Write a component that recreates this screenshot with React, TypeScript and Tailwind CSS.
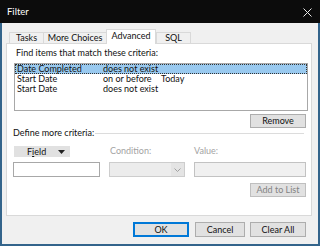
import React from 'react';

const rows = [
  { field: 'Date Completed', cond: 'does not exist', value: '' },
  { field: 'Start Date', cond: 'on or before', value: 'Today' },
  { field: 'Start Date', cond: 'does not exist', value: '' },
];

const tabs = [
  { name: 'Tasks', w: 'w-[34px]' },
  { name: 'More Choices', w: 'w-[63px]' },
  { name: 'Advanced', w: 'w-[50px]', active: true },
  { name: 'SQL', w: 'w-[35px]' },
];

const Button: React.FC<{ children: React.ReactNode; className?: string }> = ({ children, className = '' }) => (
  <div className={`flex items-center justify-center border bg-[#e1e1e1] ${className}`}>{children}</div>
);

export default function App() {
  return (
    <div className="w-[320px] h-[246px] flex flex-col bg-[#f0f0f0] text-[#111] text-[9px] leading-[10px] font-[Lato,sans-serif] whitespace-nowrap select-none">
      {/* title bar */}
      <div className="h-[23px] shrink-0 bg-[#0c0c0c] flex items-center justify-between pl-[7px] pr-[8px] text-white text-[9.5px]">
        <span>Filter</span>
        <svg width="9" height="9" viewBox="0 0 9 9" className="mt-[1px]">
          <path d="M0.5 0.5 L8.5 8.5 M8.5 0.5 L0.5 8.5" stroke="#e8e8e8" strokeWidth="1" />
        </svg>
      </div>

      <div className="flex-1 flex flex-col border-x-2 border-b-2 border-[#33648b] pt-[6px]">
        {/* tabs */}
        <div className="h-[14px] flex items-end pl-[7px]">
          {tabs.map((t) =>
            t.active ? (
              <div key={t.name} className={`${t.w} h-[15px] -mb-px relative z-10 bg-white border-x border-t border-[#d9d9d9] flex items-center justify-center pb-[2px]`}>
                {t.name}
              </div>
            ) : (
              <div key={t.name} className={`${t.w} h-[11px] bg-[#f0f0f0] border-l border-t border-[#d9d9d9] last:border-r flex items-center justify-center`}>
                {t.name}
              </div>
            )
          )}
        </div>

        {/* panel */}
        <div className="ml-[4px] w-[306px] h-[173px] bg-white border border-[#d9d9d9] flex flex-col">
          <div className="pl-[9px] pt-[4px] h-[14px]">Find items that match these criteria:</div>

          <div className="ml-[7px] mt-[5px] w-[294px] h-[48px] border border-[#a8a8a8] flex flex-col">
            {rows.map((r, i) => (
              <div
                key={i}
                className={`h-[10px] flex items-center pl-[1px] ${i === 0 ? 'bg-[#99c9ef] border border-dotted border-[#333]' : 'border border-transparent'}`}
              >
                <span className="w-[86px] shrink-0">{r.field}</span>
                <span className="w-[58px] shrink-0">{r.cond}</span>
                <span>{r.value}</span>
              </div>
            ))}
          </div>

          <Button className="self-end mr-[5px] mt-[3px] w-[56px] h-[14px] border-[#adadad]">Remove</Button>

          <div className="h-[10px] flex items-center pl-[6px] pr-[7px]">
            <span>Define more criteria:</span>
            <div className="flex-1 h-px bg-[#dcdcdc] ml-[1px] mt-[1px]" />
          </div>

          <div className="ml-[6px] mt-[8px] grid grid-cols-[87px_76px_112px] gap-x-[9px] gap-y-[5px] items-end">
            <div className="h-[11px] ml-[1px] w-[56px] bg-[#e1e1e1] flex items-center pl-[13px]">
              <span>
                F<span className="underline">i</span>eld
              </span>
              <svg width="7" height="4" viewBox="0 0 7 4" className="ml-[12px]">
                <path d="M0 0 H7 L3.5 4 Z" fill="#222" />
              </svg>
            </div>
            <div className="ml-[1px] text-[#a3a3a3] pb-px">Condition:</div>
            <div className="text-[#a3a3a3] pb-px">Value:</div>

            <div className="h-[15px] bg-white border border-[#a8a8a8]" />
            <div className="h-[15px] bg-[#ececec] border border-[#cdcdcd] flex justify-end">
              <div className="w-[13px] h-full bg-[#e4e4e4] flex items-center justify-center">
                <svg width="7" height="4" viewBox="0 0 7 4">
                  <path d="M0.5 0.5 L3.5 3.5 L6.5 0.5" stroke="#a0a0a0" fill="none" strokeWidth="1" />
                </svg>
              </div>
            </div>
            <div className="h-[15px] bg-[#f0f0f0] border border-[#c2c2c2]" />
          </div>

          <Button className="self-end mr-[5px] mt-[6px] w-[56px] h-[14px] bg-[#cccccc] border-[#bfbfbf] text-[#838383]">
            Add to List
          </Button>
        </div>

        {/* bottom buttons */}
        <div className="mt-[6px] flex justify-end pr-[12px]">
          <Button className="w-[56px] h-[15px] border-[#0078d7] border-2">OK</Button>
          <Button className="ml-[6px] w-[50px] h-[15px] border-[#adadad]">Cancel</Button>
          <Button className="ml-[5px] w-[56px] h-[15px] border-[#adadad]">Clear All</Button>
        </div>
      </div>
    </div>
  );
}
